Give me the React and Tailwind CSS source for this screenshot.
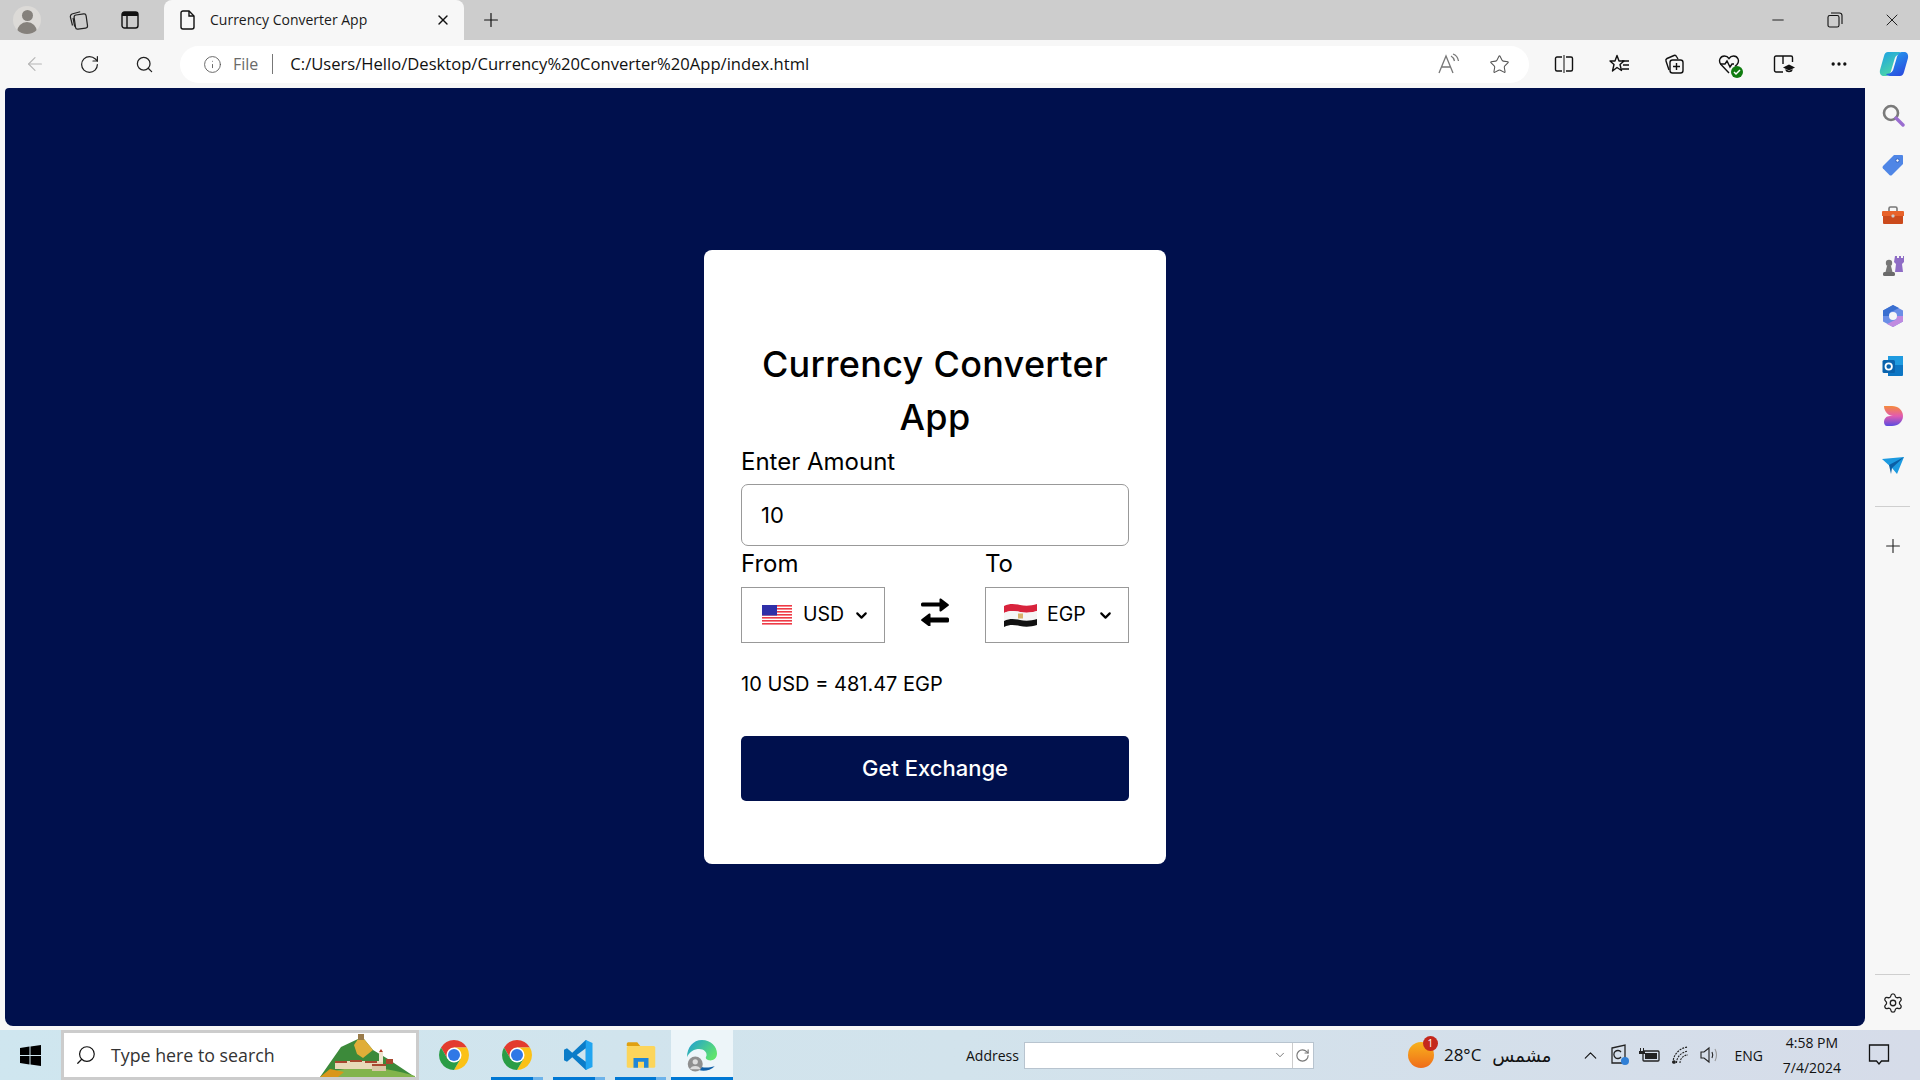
import { ArrowLeft, ChevronDown, ChevronUp, Info, Minus, MoreHorizontal, Plus, RotateCw, Search, Settings, Star, X } from 'lucide-react'

const uiFont = { fontFamily: '"Open Sans", "Noto Sans", sans-serif' }

function Slot({ children, className = '' }) {
  return <div className={`w-[55px] h-full flex items-center justify-center shrink-0 ${className}`}>{children}</div>
}

function SwapIcon() {
  return (
    <svg width="28" height="28" viewBox="0 0 28 28" fill="#000">
      <path d="M1.500 4.500h17V1.500c0-1 1-1.400 1.800-.7l7.200 5.400c.6.500.6 1.100 0 1.600l-7.200 5.400c-.8.700-1.800.3-1.800-.7V8.500h-17a1.500 1.500 0 0 1-1.500-1.500V6a1.500 1.500 0 0 1 1.500-1.500z" />
      <path d="M26.500 19.500h-17v-3c0-1-1-1.400-1.800-.7L.5 21.200c-.6.500-.6 1.100 0 1.600l7.200 5.400c.8.700 1.800.3 1.800-.7v-3h17a1.500 1.500 0 0 0 1.500-1.500V21a1.500 1.500 0 0 0-1.500-1.500z" />
    </svg>
  )
}

function UsFlag() {
  return (
    <svg width="30" height="20" viewBox="0 0 30 20">
      <rect width="30" height="20" fill="#fff" />
      {[0, 3, 6, 9, 12, 15, 18].map(y => <rect key={y} y={y} width="30" height="1.6" fill="#ee3b46" />)}
      <rect width="15" height="10.5" fill="#2f2fa8" />
    </svg>
  )
}

function EgyptFlag() {
  return (
    <svg width="33" height="24" viewBox="0 0 33 24">
      <path d="M0 3c6-3 11-2 16-1s11 1 17-1v7c-6 2-12 2-17 1S6 7 0 10z" fill="#d8233c" />
      <path d="M0 10c6-3 11-2 16-1s11 1 17-1v8c-6 2-12 2-17 1s-10-2-16 1z" fill="#f5f5f5" />
      <path d="M0 18c6-3 11-2 16-1s11 1 17-1v6c-6 2-12 2-17 1s-10-2-16 1z" fill="#111" />
      <rect x="14" y="10.5" width="5" height="5" fill="#d9b26a" />
    </svg>
  )
}

function ChromeIcon() {
  return (
    <svg width="36" height="36" viewBox="0 0 48 48">
      <path d="M6.700 14A20 20 0 0 1 41.300 14L24 14 15.300 29z" fill="#e33b2e" />
      <path d="M41.300 14A20 20 0 0 1 24 44L32.700 29 24 14z" fill="#fbc116" />
      <path d="M24 44A20 20 0 0 1 6.700 14L15.300 29 32.700 29z" fill="#2a9d46" />
      <circle cx="24" cy="24" r="10" fill="#fff" />
      <circle cx="24" cy="24" r="8" fill="#2f78e6" />
    </svg>
  )
}

function VsCodeIcon() {
  return (
    <svg width="36" height="36" viewBox="0 0 48 48">
      <path d="M33 4 15 21 8 15l-4 2v14l4 2 7-6 18 17 3-2V6z" fill="#0b7cc8" />
      <path d="M33 15v18L21 24z" fill="#d0e5ee" />
      <path d="M33 4l9 4v32l-9 4z" fill="#22a5f0" />
    </svg>
  )
}

function FilesIcon() {
  return (
    <svg width="36" height="36" viewBox="0 0 48 48">
      <path d="M5 9a2 2 0 0 1 2-2h12l4 5H5z" fill="#e0a010" />
      <rect x="5" y="12" width="38" height="29" rx="2" fill="#fcd55b" />
      <path d="M14 41V28h20v13h-6v-8h-8v8z" fill="#1f86d8" />
    </svg>
  )
}

function EdgeProfileIcon() {
  return (
    <svg width="36" height="36" viewBox="0 0 48 48">
      <defs>
        <linearGradient id="edg" x1="0" y1="0" x2="1" y2="0.6">
          <stop offset="0" stopColor="#1d9bd8" />
          <stop offset="1" stopColor="#5fe36e" />
        </linearGradient>
      </defs>
      <path d="M24 4c12 0 20 9 20 18 0 7-6 10-11 9-4-1-5-3-3-6 1-6-5-10-12-9C11 17 6 22 4 27 4 14 12 4 24 4z" fill="url(#edg)" />
      <path d="M15 30c1 8 9 14 26 9-4 4-10 6-15 6-9 0-15-5-11-15z" fill="#0f5fa8" />
      <circle cx="15" cy="36" r="10" fill="#8f8f8f" />
      <circle cx="15" cy="33" r="3.500" fill="#dcdcdc" />
      <path d="M8 43c1-6 13-6 14 0z" fill="#dcdcdc" />
    </svg>
  )
}

function CopilotIcon() {
  const ribbon = 'M15 6h15c3 0 5 1 6 3-6 0-10 3-11 7l-5 17c-1 5-4 9-9 9H9c-5 0-7-4-6-9l6-21c1-4 3-6 6-6z'
  return (
    <svg width="32" height="32" viewBox="0 0 48 48">
      <defs>
        <linearGradient id="cpa" x1="0" y1="0" x2="0.6" y2="1">
          <stop offset="0" stopColor="#1b9fe6" />
          <stop offset="1" stopColor="#52dca0" />
        </linearGradient>
        <linearGradient id="cpb" x1="1" y1="1" x2="0.4" y2="0">
          <stop offset="0" stopColor="#22a8f0" />
          <stop offset="1" stopColor="#2a4fe0" />
        </linearGradient>
      </defs>
      <path d={ribbon} fill="url(#cpa)" />
      <path d={ribbon} fill="url(#cpb)" transform="rotate(180 24 24)" />
    </svg>
  )
}

function HillArt() {
  return (
    <svg className="absolute right-0 bottom-0" width="96" height="43" viewBox="0 2 96 43">
      <path d="M0 45 21 15 38 7h6l9 11 15 9 27 18z" fill="#3c8a3a" />
      <path d="M38 7h6l9 11-10 8-6-4-3-9z" fill="#e0ae38" />
      <rect x="38" y="2" width="6" height="6" fill="#9a7b4a" />
      <path d="M8 42c17-9 52-9 87 2v1H8z" fill="#82b44c" />
      <path d="M0 45l10-8 14 3-6 5z" fill="#d9961b" />
      <rect x="15" y="29" width="48" height="8" fill="#e8d9b8" />
      <path d="M15 29h12v2H15zM30 28h12v2H30zM45 29h12v2H45z" fill="#a8482f" />
      <path d="M52 33h14v6H52z" fill="#d9c8a6" />
      <path d="M52 32h14v2H52zM66 27h7v5h-7z" fill="#a8482f" />
      <rect x="59" y="20" width="4" height="10" fill="#f0e4cf" />
      <path d="M59 20l2-3 2 3z" fill="#b33a24" />
    </svg>
  )
}

function SidebarIcons() {
  return (
    <>
      <Slot className="!h-[50px]">
        <svg width="24" height="24" viewBox="0 0 24 24" fill="none">
          <circle cx="10" cy="10" r="7" stroke="#7a7a7a" strokeWidth="2.6" />
          <path d="m15 15 7 7" stroke="#9a6dd0" strokeWidth="3.4" strokeLinecap="round" />
        </svg>
      </Slot>
      <Slot className="!h-[50px]">
        <svg width="24" height="24" viewBox="0 0 24 24">
          <path d="M13 2h8a1 1 0 0 1 1 1v8L11 22a2 2 0 0 1-2.600 0L2 15.600A2 2 0 0 1 2 13z" fill="#4f86e6" />
          <circle cx="16.500" cy="7.500" r="1.700" fill="#fff" stroke="#2c5fc0" />
        </svg>
      </Slot>
      <Slot className="!h-[51px]">
        <svg width="24" height="24" viewBox="0 0 24 24" fill="none">
          <path d="M8 7V4.500A1.500 1.500 0 0 1 9.500 3h5A1.500 1.500 0 0 1 16 4.500V7" stroke="#777" strokeWidth="1.600" />
          <path d="M1 8a1 1 0 0 1 1-1h20a1 1 0 0 1 1 1v4H1z" fill="#e8622a" />
          <path d="M2 12h20v7a1 1 0 0 1-1 1H3a1 1 0 0 1-1-1z" fill="#cb4a1c" />
          <rect x="10.500" y="10.500" width="3" height="3" rx="1" fill="#ccc" />
        </svg>
      </Slot>
      <Slot className="!h-[50px]">
        <svg width="24" height="24" viewBox="0 0 24 24">
          <path d="M14 2h2v2h2V2h2v2h2V2h1v6l-2 2 1 8h-8l1-8-2-2z" fill="#8e6cc5" />
          <circle cx="8" cy="9" r="3.200" fill="#777" />
          <path d="M6 12h4l1.500 6h-7z" fill="#777" />
          <rect x="2" y="18" width="12" height="4" rx="1.500" fill="#6b6b6b" />
        </svg>
      </Slot>
      <Slot className="!h-[50px]">
        <svg width="24" height="24" viewBox="0 0 24 24" fill="none">
          <path d="M12 1 22 6.500v11L12 23 2 17.500v-11z" fill="#6b8ee6" />
          <path d="M2 6.500 12 1l6 3-6 3a5 5 0 0 0-4 5H2z" fill="#3a6fd0" />
          <path d="M22 17.500 12 23l-6-3 6-3a5 5 0 0 0 4-5h6z" fill="#c08ae0" />
          <circle cx="12" cy="12" r="4" fill="#f7f7f7" />
        </svg>
      </Slot>
      <Slot className="!h-[50px]">
        <svg width="24" height="24" viewBox="0 0 24 24">
          <rect x="7" y="2" width="15" height="9" fill="#1f9be0" />
          <path d="M7 11h15v10a1 1 0 0 1-1 1H7z" fill="#0d76c4" />
          <rect x="1.500" y="6" width="12.500" height="13" rx="1.500" fill="#0a63ad" />
          <circle cx="7.700" cy="12.500" r="3.200" fill="none" stroke="#fff" strokeWidth="1.800" />
        </svg>
      </Slot>
      <Slot className="!h-[50px]">
        <svg width="24" height="24" viewBox="0 0 24 24">
          <defs>
            <linearGradient id="dsg" x1="0" y1="0" x2="0" y2="1">
              <stop offset="0" stopColor="#f58a3c" />
              <stop offset="0.500" stopColor="#e25bb0" />
              <stop offset="1" stopColor="#5a4be0" />
            </linearGradient>
          </defs>
          <path d="M3 2h8c6 0 11 4 11 10s-5 10-11 10H6c-2 0-3-2-3-4 0-3 2-6 6-6h3C8 12 3 8 3 2z" fill="url(#dsg)" />
        </svg>
      </Slot>
      <Slot className="!h-[50px]">
        <svg width="24" height="20" viewBox="0 0 24 20">
          <path d="M1 3 23 1l-7 17-5-6z" fill="#1c9ae0" />
          <path d="M8 9 23 1 11 12l-1 6z" fill="#0b5fa5" />
        </svg>
      </Slot>
    </>
  )
}

export default function App() {
  return (
    <div className="w-full h-screen flex flex-col overflow-hidden bg-[#f7f7f7] text-black">
      {/* title strip */}
      <div className="h-10 shrink-0 bg-[#cdcdcd] flex items-stretch" style={uiFont}>
        <div className="w-[54px] flex items-center justify-center">
          <div className="w-7 h-7 rounded-full bg-[#dcdad7] overflow-hidden flex flex-col items-center pt-1">
            <div className="w-[11px] h-[11px] rounded-full bg-[#85817c]" />
            <div className="w-[20px] h-[12px] mt-[1px] rounded-t-full bg-[#85817c]" />
          </div>
        </div>
        <div className="w-[48px] flex items-center justify-center">
          <svg width="22" height="22" viewBox="0 0 20 20" fill="none" stroke="#222" strokeWidth="1.100">
            <rect x="7" y="5" width="11" height="13" rx="2" transform="rotate(-8 12 11)" />
            <path d="M5 15 3 7c0-1 .5-2 1.500-2.500L12 2.500" />
            <path d="M7 16 5.500 8" />
          </svg>
        </div>
        <div className="w-[56px] flex items-center justify-center">
          <svg width="18" height="18" viewBox="0 0 18 18" fill="none">
            <rect x="1" y="1" width="16" height="16" rx="2.500" stroke="#111" strokeWidth="1.400" />
            <path d="M1 5h16V3.500A2.500 2.500 0 0 0 14.500 1h-11A2.500 2.500 0 0 0 1 3.500z" fill="#111" />
            <path d="M6 5v12" stroke="#111" strokeWidth="1.400" />
          </svg>
        </div>
        <div className="ml-[6px] w-[300px] bg-[#f7f7f7] rounded-t-lg flex items-center pl-[15px] pr-[13px]">
          <svg width="16" height="20" viewBox="0 0 16 20" fill="none" stroke="#111" strokeWidth="1.400">
            <path d="M2 3a2 2 0 0 1 2-2h6l5 5v11a2 2 0 0 1-2 2H4a2 2 0 0 1-2-2z" />
            <path d="M10 1v5h5" />
          </svg>
          <span className="ml-[15px] -mt-[2px] text-[14px] text-[#1a1a1a] flex-1 whitespace-nowrap">Currency Converter App</span>
          <X size={16} strokeWidth={2} className="text-[#111]" />
        </div>
        <div className="ml-[12px] w-[30px] flex items-center justify-center">
          <Plus size={22} strokeWidth={1.300} className="text-[#111]" />
        </div>
        <div className="flex-1" />
        <Slot className="!w-[57px]"><Minus size={18} strokeWidth={1.200} className="text-[#111]" /></Slot>
        <Slot className="!w-[57px]">
          <svg width="16" height="16" viewBox="0 0 16 16" fill="none" stroke="#111" strokeWidth="1.100">
            <rect x="1" y="3.500" width="11" height="11.500" rx="1.800" />
            <path d="M4 1h8.500A2.500 2.500 0 0 1 15 3.500V12" />
          </svg>
        </Slot>
        <Slot className="!w-[57px]"><X size={20} strokeWidth={1.100} className="text-[#111]" /></Slot>
      </div>

      {/* address toolbar */}
      <div className="h-12 shrink-0 flex items-center pl-[7px]" style={uiFont}>
        <Slot><ArrowLeft size={22} strokeWidth={1.200} className="text-[#b5b5b5]" /></Slot>
        <Slot><RotateCw size={21} strokeWidth={1.400} className="text-[#222]" /></Slot>
        <Slot><Search size={19} strokeWidth={1.600} className="text-[#222]" /></Slot>
        <div className="ml-2 w-[1349px] h-[37px] shrink-0 rounded-full bg-white flex items-center pl-[23px]">
          <Info size={19} strokeWidth={1.100} className="text-[#555]" />
          <span className="ml-[11px] text-[16px] text-[#6a6a6a]">File</span>
          <div className="ml-[14px] w-px h-[20px] bg-[#777]" />
          <span className="ml-[17px] text-[16.600px] text-[#111] whitespace-nowrap">C:/Users/Hello/Desktop/Currency%20Converter%20App/index.html</span>
          <div className="flex-1" />
          <div className="w-[50px] flex justify-center">
            <svg width="24" height="22" viewBox="0 0 24 22" fill="none" stroke="#777" strokeWidth="1.300">
              <path d="M2 20 9 3l7 17M4.500 14h9" />
              <path d="M14 3c2 1 3 3 3.500 5M16 1c3 1 5 4 5.500 7" />
            </svg>
          </div>
          <div className="w-[50px] mr-[5px] flex justify-center">
            <Star size={21} strokeWidth={1.200} className="text-[#555]" />
          </div>
        </div>
        <Slot className="ml-[7px]">
          <svg width="20" height="20" viewBox="0 0 20 20" fill="none" stroke="#111" strokeWidth="1.400">
            <path d="M8 3H3a1.500 1.500 0 0 0-1.500 1.500v11A1.500 1.500 0 0 0 3 17h5M12 3h5a1.500 1.500 0 0 1 1.500 1.500v11A1.500 1.500 0 0 1 17 17h-5" />
            <path d="M10 1v18" strokeWidth="1" />
          </svg>
        </Slot>
        <Slot>
          <svg width="22" height="22" viewBox="0 0 22 22" fill="none" stroke="#111" strokeWidth="1.400">
            <path d="M9 2.500 11 8h5l-4 3.500 1.500 6L9 14.500 4.500 18l1.500-6.500L2 8h5z" strokeLinejoin="round" />
            <path d="M14 8h7M15 12h6M14 16h7" />
          </svg>
        </Slot>
        <Slot>
          <svg width="22" height="22" viewBox="0 0 22 22" fill="none" stroke="#111" strokeWidth="1.400">
            <path d="M6 17 3 8a2 2 0 0 1 1-2.500L11 2.500a2 2 0 0 1 2.500 1L15 6" />
            <rect x="7" y="7" width="13" height="13" rx="2.500" />
            <path d="M13.500 10v7M10 13.500h7" />
          </svg>
        </Slot>
        <Slot>
          <div className="relative">
            <svg width="22" height="22" viewBox="0 0 22 22" fill="none" stroke="#111" strokeWidth="1.400">
              <path d="M11 20 3 11.500C0 8 2 3 6.500 3 8.500 3 10 4 11 5.500 12 4 13.500 3 15.500 3 20 3 22 8 19 11.500L17 13.500" />
              <path d="M2 11h5l2-3 3 6 2-3h2" />
            </svg>
            <div className="absolute -right-[3px] -bottom-[3px] w-[12px] h-[12px] rounded-full bg-[#107c10] flex items-center justify-center">
              <svg width="8" height="8" viewBox="0 0 8 8" fill="none" stroke="#fff" strokeWidth="1.500"><path d="m1 4 2 2 4-4" /></svg>
            </div>
          </div>
        </Slot>
        <Slot>
          <svg width="22" height="22" viewBox="0 0 22 22" fill="none" stroke="#111" strokeWidth="1.400">
            <path d="M10 19H3a1.500 1.500 0 0 1-1.500-1.500v-13A1.500 1.500 0 0 1 3 3h7v8M10 3h8a1.500 1.500 0 0 1 1.500 1.500V9" />
            <path d="M10 14.500 16 11.500l6 3-6 3z" fill="#111" stroke="none" />
            <path d="M12.500 17c0 3 7 3 7 0v-1l-3.500 2-3.500-2z" fill="#111" stroke="none" />
          </svg>
        </Slot>
        <Slot><MoreHorizontal size={20} strokeWidth={2} className="text-[#111]" /></Slot>
        <Slot><CopilotIcon /></Slot>
      </div>

      {/* page and side pane */}
      <div className="flex-1 min-h-0 flex">
        <main className="flex-1 ml-[5px] mb-[4px] rounded-b-lg rounded-tl-sm bg-[#00104d] flex items-center justify-center" style={{ fontFamily: 'Inter, "Noto Sans", sans-serif' }}>
          <div className="w-[462px] h-[614px] bg-white rounded-lg px-[37px] pt-[88px] flex flex-col">
            <h1 className="text-[36px] leading-[53px] font-medium text-center tracking-[0.3px]">Currency Converter App</h1>
            <label className="h-[40px] pb-[5px] flex items-center text-[24px] leading-none">Enter Amount</label>
            <input
              type="text"
              defaultValue="10"
              className="w-full h-[62px] shrink-0 border border-[#999] rounded-[7px] px-[19px] text-[22px] outline-none"
            />
            <div className="flex justify-between">
              <div className="w-[144px]">
                <div className="h-[41px] pb-[5px] flex items-center text-[24px] leading-none">From</div>
                <div className="h-[56px] border border-[#999] flex items-center pl-[20px] pr-[14px]">
                  <UsFlag />
                  <span className="ml-[11px] flex-1 text-[19.500px]">USD</span>
                  <ChevronDown size={17} strokeWidth={3} />
                </div>
              </div>
              <div className="mt-[35px] flex-1 flex items-center justify-center">
                <SwapIcon />
              </div>
              <div className="w-[144px]">
                <div className="h-[41px] pb-[5px] flex items-center text-[24px] leading-none">To</div>
                <div className="h-[56px] border border-[#999] flex items-center pl-[18px] pr-[14px]">
                  <EgyptFlag />
                  <span className="ml-[10px] flex-1 text-[19.500px]">EGP</span>
                  <ChevronDown size={17} strokeWidth={3} />
                </div>
              </div>
            </div>
            <p className="mt-[24px] h-[34px] flex items-center text-[20px] leading-none">10 USD = 481.47 EGP</p>
            <button className="mt-[35px] h-[65px] w-full bg-[#00104d] text-white rounded-[5px] text-[22px] font-medium">Get Exchange</button>
          </div>
        </main>
        <aside className="w-[55px] shrink-0 flex flex-col items-center pt-[2px]">
          <SidebarIcons />
          <div className="mt-[15px] w-[35px] h-px bg-[#cfcfcf]" />
          <div className="mt-[24px] h-[30px] flex items-center"><Plus size={22} strokeWidth={1.200} className="text-[#222]" /></div>
          <div className="flex-1" />
          <div className="w-[35px] h-px bg-[#cfcfcf]" />
          <div className="mt-[15px] mb-[14px] h-[26px] flex items-center"><Settings size={22} strokeWidth={1.400} className="text-[#222]" /></div>
        </aside>
      </div>

      {/* windows taskbar */}
      <div className="h-[50px] shrink-0 bg-gradient-to-r from-[#cfe6ef] via-[#d2e3ec] to-[#d6dce9] flex items-stretch" style={uiFont}>
        <div className="w-[61px] flex items-center justify-center">
          <svg width="21" height="21" viewBox="0 0 21 21" fill="#000">
            <path d="M0 3 9.500 1.500v8.500H0zM10.500 1.400 21 0v10H10.500zM0 11h9.500v8.500L0 18zM10.500 11H21v10l-10.500-1.500z" />
          </svg>
        </div>
        <div className="w-[358px] border-[3px] border-[#cccccc] bg-white flex items-center pl-[11px] overflow-hidden relative">
          <Search size={22} strokeWidth={1.300} className="text-[#111] -scale-x-100" />
          <span className="ml-[14px] text-[17.800px] text-[#333]">Type here to search</span>
          <HillArt />
        </div>
        <div className="w-[252px] flex">
          {[
            { w: 'w-[67px] pl-[3px]', icon: <ChromeIcon /> },
            { w: 'w-[62px]', icon: <ChromeIcon />, open: true },
            { w: 'w-[62px]', icon: <VsCodeIcon />, open: true },
            { w: 'w-[61px]', icon: <FilesIcon />, open: true }
          ].map((t, i) => (
            <div key={i} className={`${t.w} relative flex items-center justify-center`}>
              {t.icon}
              {t.open && (
                <div className="absolute bottom-0 left-[5px] right-[5px] h-[3px] flex">
                  <div className="flex-1 bg-[#0078d4]" />
                  <div className="w-[10px] bg-[#6db3ea]" />
                </div>
              )}
            </div>
          ))}
        </div>
        <div className="w-[62px] bg-[#edf5f9] relative flex items-center justify-center">
          <EdgeProfileIcon />
          <div className="absolute bottom-0 left-0 right-0 h-[3px] bg-[#0078d4]" />
        </div>
        <div className="ml-[233px] flex items-center">
          <span className="text-[14px] text-[#111]">Address</span>
          <div className="ml-[5px] w-[290px] h-[27px] bg-white border border-[#b8c4cf] flex items-center justify-end">
            <ChevronDown size={14} strokeWidth={1.200} className="text-[#444] mr-[5px]" />
            <div className="w-[21px] h-full border-l border-[#ccc] flex items-center justify-center">
              <RotateCw size={15} strokeWidth={1.800} className="text-[#777]" />
            </div>
          </div>
        </div>
        <div className="ml-[94px] flex items-center">
          <div className="relative w-[26px] h-[26px] rounded-full bg-gradient-to-b from-[#f7b21c] to-[#ef6c1a]">
            <div className="absolute -right-[4px] -top-[6px] w-[15px] h-[15px] rounded-full bg-[#c4281c] text-white text-[10px] flex items-center justify-center">1</div>
          </div>
          <span className="ml-[10px] text-[17px] text-[#111]">28°C</span>
          <span className="ml-[11px] text-[18px] text-[#111]" style={{ fontFamily: '"DejaVu Sans", sans-serif' }}>مشمس</span>
        </div>
        <div className="ml-[29px] flex items-center text-[#111]">
          <ChevronUp size={21} strokeWidth={1.300} />
          <svg className="ml-[8px]" width="22" height="22" viewBox="0 0 22 22" fill="none" stroke="#222" strokeWidth="1.300">
            <path d="M3 4 16 1v18H3z" />
            <path d="M12 8a4 4 0 1 0 0 5" />
            <circle cx="16" cy="17" r="4" fill="#2f7fd6" stroke="none" />
          </svg>
          <svg className="ml-[8px]" width="22" height="16" viewBox="0 0 22 16" fill="#222">
            <rect x="4" y="4" width="16" height="10" rx="1" fill="none" stroke="#222" strokeWidth="1.300" />
            <rect x="6" y="6" width="12" height="6" />
            <path d="M1 1h1v3h2V1h1v3h1v3H0V4h1z" />
          </svg>
          <svg className="ml-[9px]" width="20" height="20" viewBox="0 0 20 20" fill="none" stroke="#222" strokeWidth="1.100">
            <path d="M3 18C3 10 9 3 18 2M6.500 18c0-6 5-11 11.500-12M10 18c0-4 3-8 8-8" strokeDasharray="2 1" />
            <circle cx="4" cy="17" r="1.300" fill="#222" />
          </svg>
          <svg className="ml-[9px]" width="20" height="20" viewBox="0 0 20 20" fill="none" stroke="#222" strokeWidth="1.100">
            <path d="M2 7h3l5-4v14l-5-4H2z" />
            <path d="M13 7c1 2 1 4 0 6" />
            <path d="M16 4c2 4 2 8 0 12" stroke="#999" />
          </svg>
          <span className="ml-[15px] text-[14px]">ENG</span>
        </div>
        <div className="ml-[13px] w-[72px] flex flex-col items-center justify-center text-[14px] leading-[25px] text-[#111] whitespace-nowrap">
          <span>4:58 PM</span>
          <span>7/4/2024</span>
        </div>
        <div className="ml-[20px] flex items-center">
          <svg width="22" height="24" viewBox="0 0 22 24" fill="none" stroke="#111" strokeWidth="1.300">
            <path d="M1.500 2h19v16h-7l-2.500 3-2.500-3h-7z" />
          </svg>
        </div>
      </div>
    </div>
  )
}
